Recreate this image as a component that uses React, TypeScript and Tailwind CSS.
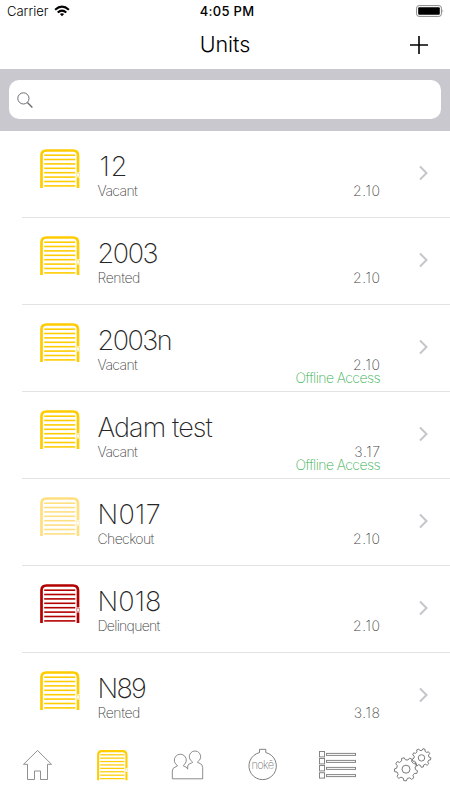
type Unit = {
  name: string;
  status: string;
  code: string;
  offline?: boolean;
  color: string;
  nameClass: string;
  statusClass: string;
};

const YELLOW = '#ffcc00';

const units: Unit[] = [
  { name: '12', status: 'Vacant', code: '2.10', color: YELLOW, nameClass: 'pl-[2px] tracking-[1px]', statusClass: 'tracking-[-0.6px]' },
  { name: '2003', status: 'Rented', code: '2.10', color: YELLOW, nameClass: 'tracking-[-1.4px]', statusClass: 'tracking-[-0.4px]' },
  { name: '2003n', status: 'Vacant', code: '2.10', offline: true, color: YELLOW, nameClass: 'tracking-[-1.5px]', statusClass: 'tracking-[-0.6px]' },
  { name: 'Adam test', status: 'Vacant', code: '3.17', offline: true, color: YELLOW, nameClass: 'tracking-[-0.9px]', statusClass: 'tracking-[-0.6px]' },
  { name: 'N017', status: 'Checkout', code: '2.10', color: '#ffdf80', nameClass: 'tracking-[0.3px]', statusClass: 'tracking-[-0.6px]' },
  { name: 'N018', status: 'Delinquent', code: '2.10', color: '#b30000', nameClass: 'tracking-[0.1px]', statusClass: 'tracking-[-0.7px]' },
  { name: 'N89', status: 'Rented', code: '3.18', color: YELLOW, nameClass: 'tracking-[-1.7px]', statusClass: 'tracking-[-0.4px]' },
];

function DoorIcon({ color, className }: { color: string; className: string }) {
  return (
    <svg viewBox="0 0 40 40" className={className} fill="none">
      <path d="M1.5 39V6.5Q1.5 1.5 6.5 1.5H33Q38 1.5 38 6.5V39" stroke={color} strokeWidth="2.7" />
      {[6.2, 10.5, 14.9, 19.3, 23.7, 28.1, 32.5, 36.9].map((y) => (
        <path key={y} d={`M4.2 ${y}H35.3`} stroke={color} strokeWidth="1.6" />
      ))}
      <rect x="36.2" y="23.4" width="3.8" height="5" fill="#fff" />
      <rect x="36.8" y="24.3" width="2.6" height="3" stroke={color} strokeWidth="0.7" opacity="0.6" />
    </svg>
  );
}

function gearPath(cx: number, cy: number, inner: number, outer: number, teeth: number, turn: number) {
  const points: string[] = [];
  const step = (Math.PI * 2) / teeth;
  for (let i = 0; i < teeth; i++) {
    const corners: [number, number][] = [[-0.3, inner], [-0.17, outer], [0.17, outer], [0.3, inner]];
    for (const [offset, radius] of corners) {
      const angle = turn + (i + offset) * step;
      points.push(`${(cx + Math.cos(angle) * radius).toFixed(2)} ${(cy + Math.sin(angle) * radius).toFixed(2)}`);
    }
  }
  return `M${points.join('L')}Z`;
}

function StatusBar() {
  return (
    <div className="flex h-[22px] shrink-0 items-center justify-between pl-[7px] pr-[6px] text-[13px] leading-[22px]">
      <div className="flex w-[120px] items-center gap-[5px]">
        <span className="w-[42px] whitespace-nowrap font-light tracking-[0px]">Carrier</span>
        <svg viewBox="0 0 16 12" className="h-3 w-4" fill="none" stroke="#000" strokeWidth="2.1">
          <path d="M1.1 4.7Q8 -1.3 14.9 4.7" />
          <path d="M3.7 7.5Q8 3.8 12.3 7.5" />
          <path d="M5.9 9.1Q8 7.3 10.1 9.1L8 11.3Z" fill="#000" stroke="none" />
        </svg>
      </div>
      <span className="pl-[3px] font-medium tracking-[0.3px]">4:05 PM</span>
      <div className="flex w-[120px] justify-end">
        <svg viewBox="0 0 28 12" className="h-3 w-7" fill="none">
          <rect x="0.6" y="0.6" width="24.8" height="10.8" rx="2.5" stroke="#888" strokeWidth="1" />
          <rect x="2.2" y="2.2" width="21.6" height="7.6" rx="1" fill="#000" />
          <path d="M26.6 4Q28 6 26.6 8Z" fill="#888" />
        </svg>
      </div>
    </div>
  );
}

function UnitRow({ unit }: { unit: Unit }) {
  return (
    <li className="ml-[22px] flex h-[87px] shrink-0 border-b border-[#e3e3e5]">
      <DoorIcon color={unit.color} className="ml-[18px] mt-[18px] size-10 shrink-0" />
      <div className="ml-[17.5px] flex-1 whitespace-nowrap pt-[19px]">
        <div className={`text-[27px] font-extralight leading-[34px] text-[#262626] ${unit.nameClass}`}>{unit.name}</div>
        <div className={`text-[14px] font-extralight leading-[14px] text-[#444] ${unit.statusClass}`}>{unit.status}</div>
      </div>
      <div className="pt-[53px] text-right text-[14px] font-extralight">
        <div className="-mr-[0.5px] leading-[14px] tracking-[0.6px] text-[#444]">{unit.code}</div>
        {unit.offline && <div className="leading-[11px] tracking-[-0.56px] text-[#3bb055]">Offline Access</div>}
      </div>
      <svg viewBox="0 0 10 16" className="ml-[39px] mr-[21px] mt-[34px] h-4 w-[10px]" fill="none" stroke="#c5c5ca" strokeWidth="2">
        <path d="M1 1.5L7.5 8L1 14.5" />
      </svg>
    </li>
  );
}

function TabBar() {
  return (
    <nav className="grid h-[68px] shrink-0 grid-cols-6 bg-white">
      <svg viewBox="0 0 75 68" fill="none" stroke="#858585" strokeWidth="0.9">
        <path d="M37.5 18.5L51.5 32.3H47.5V47.5H40.5V39H34.5V47.5H27.5V32.3H23.5Z" />
      </svg>
      <div className="pl-[22px] pt-[17.5px]">
        <DoorIcon color={YELLOW} className="size-[31px]" />
      </div>
      <svg viewBox="0 0 75 68" fill="none" stroke="#808080" strokeWidth="0.9">
        <path d="M22.3 46.8V39Q22.3 35.8 26 34.6Q27.8 34.2 27.3 33.4A6 6 0 1 1 33.3 33.4Q33 34.2 35 34.6Q37.3 35.5 37.7 37.2V34Q38 31.8 41.5 31Q43.2 30.6 42.3 29.7A5.7 5.7 0 1 1 47.7 29.7Q46.8 30.6 49 31Q52.7 32 52.7 35.5V46.8Z" />
      </svg>
      <div className="grid">
        <svg viewBox="0 0 75 68" className="col-start-1 row-start-1" fill="none" stroke="#808080" strokeWidth="1">
          <path d="M34.5 20.6V17.3H40.8V20.6A13.7 13.7 0 1 1 34.5 20.6Z" />
        </svg>
        <span className="col-start-1 row-start-1 pt-[25px] text-center text-[11px] font-extralight leading-[16px] tracking-[-0.65px] text-[#777]">nokē</span>
      </div>
      <svg viewBox="0 0 75 68" fill="none" stroke="#858585" strokeWidth="1">
        {[19.5, 26.5, 33.5, 40.7].map((y) => (
          <g key={y}>
            <rect x="19.5" y={y} width="5" height="5.4" />
            <rect x="26.5" y={y + 1.9} width="29" height="2" />
          </g>
        ))}
      </svg>
      <svg viewBox="0 0 75 68" fill="none" stroke="#747474" strokeWidth="0.95" strokeLinejoin="round">
        <path d={gearPath(31, 37.2, 9.4, 11.6, 9, 0.25)} />
        <circle cx="31" cy="37.2" r="4" />
        <path d={gearPath(46.5, 25.9, 7.5, 9.3, 9, 0.1)} />
        <circle cx="46.5" cy="25.9" r="3.2" />
      </svg>
    </nav>
  );
}

export default function App() {
  return (
    <div className="flex h-[800px] w-[450px] flex-col overflow-hidden bg-white font-['Inter','Liberation_Sans',sans-serif] text-black">
      <StatusBar />
      <header className="grid h-[47px] shrink-0 grid-cols-3 items-start">
        <h1 className="col-start-2 text-center text-[21.5px] font-light leading-[45px] tracking-[-0.1px]">Units</h1>
        <svg viewBox="0 0 20 20" className="mr-[21px] mt-[13px] size-5 justify-self-end" stroke="#000" strokeWidth="1.6">
          <path d="M1 10H19M10 1V19" />
        </svg>
      </header>
      <div className="h-[62px] shrink-0 bg-[#c9c8ce] px-[9px] pt-[11px]">
        <div className="flex h-[39px] items-center rounded-[10px] bg-white pl-2">
          <svg viewBox="0 0 16 16" className="size-4" fill="none" stroke="#6d6d72" strokeWidth="1">
            <circle cx="6.4" cy="6.4" r="5.6" />
            <path d="M10.4 10.4L15.4 15.4" strokeWidth="1.4" />
          </svg>
        </div>
      </div>
      <ul className="flex h-[601px] shrink-0 flex-col overflow-hidden">
        {units.map((unit) => (
          <UnitRow key={unit.name} unit={unit} />
        ))}
      </ul>
      <TabBar />
    </div>
  );
}
